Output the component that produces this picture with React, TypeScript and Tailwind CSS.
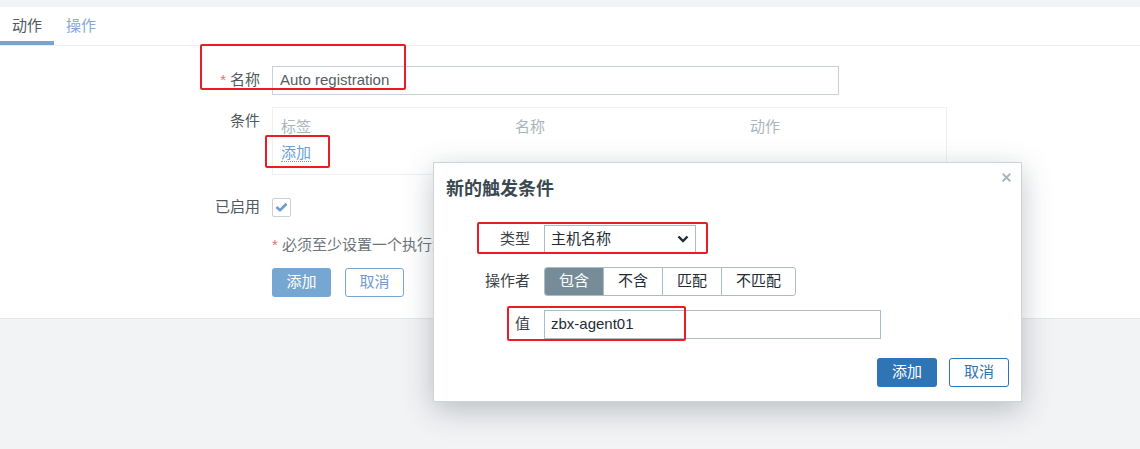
import { X } from 'lucide-react'

const font = { fontFamily: '"Liberation Sans", "Noto Sans CJK SC", sans-serif' }

function RedBox({ className }: { className: string }) {
  return <div className={`absolute border-2 border-[#ec1c24] rounded-[2px] pointer-events-none ${className}`} />
}

function MainForm() {
  return (
    <div className="bg-white border-b border-[#e3e7ea]">
      {/* tabs */}
      <div className="flex h-[39px] border-b border-[#ebeef0]">
        <div className="relative px-3 flex items-center text-[15px] text-[#4f5a60]">
          动作
          <span className="absolute left-0 right-0 bottom-0 h-[4px] bg-[#77a4d0]" />
        </div>
        <div className="px-3 flex items-center text-[15px] text-[#86a7d4]">操作</div>
      </div>

      <div className="pt-[20px] pb-[21px] text-[15px] text-[#4f5a60]">
        {/* name */}
        <div className="flex gap-3">
          <div className="w-[260px] h-[29px] flex items-center justify-end">
            <span className="text-[#e57373] mr-1">*</span>名称
          </div>
          <div className="w-[567px] h-[29px] border border-[#c9d1d6] flex items-center pl-[7px] text-[#555d62]">
            Auto registration
          </div>
        </div>

        {/* conditions */}
        <div className="flex gap-3 mt-[12px]">
          <div className="w-[260px] h-[29px] flex items-center justify-end">条件</div>
          <div className="w-[675px] border border-[#eef0f2] pl-2 pt-[10px] pb-[12px]">
            <div className="grid grid-cols-[234px_235px_1fr] leading-[18px] text-[#aab4ba]">
              <span>标签</span>
              <span>名称</span>
              <span>动作</span>
            </div>
            <div className="mt-[8px] leading-[18px]">
              <span className="text-[#6a9fd6] border-b border-dotted border-[#6a9fd6]">添加</span>
            </div>
          </div>
        </div>

        {/* enabled */}
        <div className="flex gap-3 mt-[18px]">
          <div className="w-[260px] h-[28px] flex items-center justify-end">已启用</div>
          <div className="h-[28px] flex items-center">
            <div className="w-[19px] h-[19px] border border-[#c9d1d6] rounded-[2px] flex items-center justify-center">
              <svg width="13" height="10" viewBox="0 0 13 10">
                <polyline points="1.5,5 5,8.2 11.5,1.8" fill="none" stroke="#6e9bd1" strokeWidth="2.6" strokeLinejoin="round" />
              </svg>
            </div>
          </div>
        </div>

        {/* note */}
        <div className="ml-[272px] mt-[15px] leading-[18px] text-[#6b757b]">
          <span className="text-[#e57373]">*</span> 必须至少设置一个执行动作或恢复动作或更新动作。
        </div>

        {/* buttons */}
        <div className="ml-[272px] mt-[14px] flex gap-[14px]">
          <button className="w-[59px] h-[29px] rounded-[3px] bg-[#76a6d2] text-white">添加</button>
          <button className="w-[59px] h-[29px] rounded-[3px] border border-[#7aa6d4] text-[#6f9bcf] bg-white">取消</button>
        </div>
      </div>
    </div>
  )
}

function Dialog() {
  const segs = ['包含', '不含', '匹配', '不匹配']
  return (
    <div className="absolute left-[433px] top-[162px] w-[589px] h-[240px] bg-white border border-[#cdd4d8] shadow-[0_8px_28px_rgba(40,55,65,0.28)] pl-[12px] pr-[12px] pt-[16px] text-[15px]">
      <X className="absolute right-[8px] top-[8px] text-[#a9b4ba]" size={13} strokeWidth={3.5} />
      <div className="text-[18px] font-bold leading-[20px] text-[#3a4850]">新的触发条件</div>

      <div className="mt-[26px] flex gap-[14px] text-[#3b4348]">
        <div className="w-[84px] h-[28px] flex items-center justify-end">类型</div>
        <div className="w-[152px] h-[28px] border border-[#acbbc4] flex items-center justify-between pl-[6px] pr-[6px] text-[#1f2c33]">
          <span>主机名称</span>
          <svg width="12" height="8" viewBox="0 0 12 8">
            <polyline points="1.5,1.5 6,6 10.5,1.5" fill="none" stroke="#1f2c33" strokeWidth="2.4" />
          </svg>
        </div>
      </div>

      <div className="mt-[14px] flex gap-[14px] text-[#3b4348]">
        <div className="w-[84px] h-[29px] flex items-center justify-end">操作者</div>
        <div className="flex h-[29px] border border-[#acbbc4] rounded-[3px] overflow-hidden">
          {segs.map((s, i) => (
            <div
              key={s}
              className={`px-[14px] flex items-center ${i > 0 ? 'border-l border-[#acbbc4]' : ''} ${
                i === 0 ? 'bg-[#768d99] text-white' : 'text-[#1f2c33]'
              }`}
            >
              {s}
            </div>
          ))}
        </div>
      </div>

      <div className="mt-[14px] flex gap-[14px] text-[#3b4348]">
        <div className="w-[84px] h-[29px] flex items-center justify-end">值</div>
        <div className="w-[337px] h-[29px] border border-[#acbbc4] flex items-center pl-[6px] text-[#1f2c33]">
          zbx-agent01
        </div>
      </div>

      <div className="mt-[19px] flex justify-end gap-[12px]">
        <button className="w-[60px] h-[29px] rounded-[3px] bg-[#2f74b5] text-white">添加</button>
        <button className="w-[60px] h-[29px] rounded-[3px] border border-[#2f74b5] text-[#2f74b5] bg-white">取消</button>
      </div>
    </div>
  )
}

export default function App() {
  return (
    <div className="relative w-full min-h-[449px] bg-[#f2f3f5] overflow-hidden" style={font}>
      <div className="h-[7px]" />
      <MainForm />
      <Dialog />
      <RedBox className="left-[200px] top-[44px] w-[206px] h-[46px]" />
      <RedBox className="left-[265px] top-[135px] w-[65px] h-[33px]" />
      <RedBox className="left-[477px] top-[222px] w-[231px] h-[32px]" />
      <RedBox className="left-[507px] top-[306px] w-[179px] h-[35px]" />
    </div>
  )
}
